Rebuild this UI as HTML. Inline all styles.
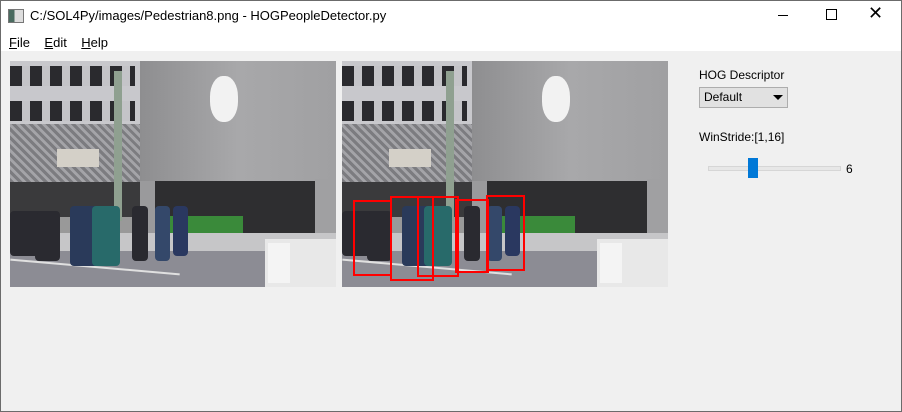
<!DOCTYPE html><html><head><style>
body{margin:0;width:902px;height:412px;background:#f0f0f0;font-family:"Liberation Sans",sans-serif;font-size:12px;position:relative;overflow:hidden}
.a{position:absolute}
.title{left:0;top:0;width:900px;height:31px;background:#fff;border:1px solid #6b6b6b;border-bottom:none}
.menu{left:1px;top:31px;width:900px;height:20px;background:#fff}
.img{width:326px;height:226px;top:61px;overflow:hidden;background:#999}
.img div{position:absolute}
.r{position:absolute;border:2px solid #f00;box-sizing:border-box}
.w{background:repeating-linear-gradient(90deg,#2a2a2e 0 12px,#c4c4c8 12px 20px)}
.p{background:#2a2a30;border-radius:4px}
</style></head><body>
<div class="a" style="left:0;top:0;width:900px;height:410px;border:1px solid #6b6b6b"></div>
<div class="a title"></div>
<div class="a" style="left:8px;top:9px;width:14px;height:12px;border:1px solid #777;background:linear-gradient(90deg,#4a6b60 40%,#ddd 40%)"></div>
<div class="a" style="left:30px;top:8px;font-size:13px;color:#000">C:/SOL4Py/images/Pedestrian8.png - HOGPeopleDetector.py</div>
<div class="a" style="left:778px;top:15px;width:10px;height:1px;background:#000"></div>
<div class="a" style="left:826px;top:9px;width:9px;height:9px;border:1px solid #000"></div>
<div class="a" style="left:868px;top:3px;font-size:18px">✕</div>
<div class="a menu"></div>
<div class="a" style="left:9px;top:35px;font-size:13px"><u>F</u>ile&nbsp;&nbsp;&nbsp;&nbsp;<u>E</u>dit&nbsp;&nbsp;&nbsp;&nbsp;<u>H</u>elp</div>

<div id="ph" class="a img" style="left:10px">
<div style="left:0;top:0;width:130px;height:64px;background:#c8c8cc"></div>
<div class="w" style="left:0;top:5px;width:125px;height:20px"></div>
<div class="w" style="left:0;top:40px;width:125px;height:20px"></div>
<div style="left:0;top:63px;width:130px;height:58px;background:repeating-linear-gradient(45deg,#7c7c80 0 3px,#a4a4a8 3px 6px)"></div>
<div style="left:47px;top:88px;width:42px;height:18px;background:#d4d0c8"></div>
<div style="left:0;top:121px;width:130px;height:35px;background:#3a3a3c"></div>
<div style="left:130px;top:0;width:196px;height:122px;background:linear-gradient(90deg,#8e8e90,#a8a8aa 50%,#a0a0a2)"></div>
<div style="left:200px;top:15px;width:28px;height:46px;background:#f2f2f2;border-radius:45%"></div>
<div style="left:104px;top:10px;width:8px;height:150px;background:#8fa090"></div>
<div style="left:145px;top:120px;width:160px;height:53px;background:#2e2e30"></div>
<div style="left:305px;top:118px;width:21px;height:60px;background:#a0a0a2"></div>
<div style="left:130px;top:120px;width:15px;height:55px;background:#9a9a9c"></div>
<div style="left:160px;top:155px;width:73px;height:28px;background:#3a8a3a"></div>
<div style="left:0;top:172px;width:326px;height:22px;background:#c6c6c8"></div>
<div style="left:0;top:190px;width:326px;height:36px;background:#8c8c94"></div>
<div style="left:0;top:205px;width:170px;height:2px;background:#e0e0e0;transform:rotate(5deg)"></div>
<div class="p" style="left:0;top:150px;width:50px;height:45px"></div>
<div class="p" style="left:25px;top:152px;width:25px;height:48px"></div>
<div class="p" style="left:60px;top:145px;width:30px;height:60px;background:#2a3a5a"></div>
<div class="p" style="left:82px;top:145px;width:28px;height:60px;background:#286a6a"></div>
<div class="p" style="left:122px;top:145px;width:16px;height:55px"></div>
<div class="p" style="left:145px;top:145px;width:15px;height:55px;background:#34486a"></div>
<div class="p" style="left:163px;top:145px;width:15px;height:50px;background:#2a3860"></div>
<div style="left:255px;top:178px;width:71px;height:48px;background:#e8e8e8"></div>
<div style="left:258px;top:182px;width:22px;height:40px;background:#f4f4f4"></div>
</div>
<div id="ph2" class="a img" style="left:342px"></div>
<script>document.getElementById('ph2').innerHTML=document.getElementById('ph').innerHTML;</script>
<div class="r" style="left:353px;top:200px;width:39px;height:76px"></div>
<div class="r" style="left:390px;top:196px;width:44px;height:85px"></div>
<div class="r" style="left:417px;top:196px;width:42px;height:81px"></div>
<div class="r" style="left:455px;top:199px;width:34px;height:74px"></div>
<div class="r" style="left:486px;top:195px;width:39px;height:76px"></div>

<div class="a" style="left:699px;top:68px">HOG Descriptor</div>
<div class="a" style="left:699px;top:87px;width:87px;height:19px;background:#e1e1e1;border:1px solid #adadad"></div>
<div class="a" style="left:704px;top:90px">Default</div>
<div class="a" style="left:773px;top:95px;width:0;height:0;border-left:5px solid transparent;border-right:5px solid transparent;border-top:5px solid #000"></div>
<div class="a" style="left:699px;top:130px">WinStride:[1,16]</div>
<div class="a" style="left:708px;top:166px;width:131px;height:3px;background:#e7e7e7;border:1px solid #d6d6d6"></div>
<div class="a" style="left:748px;top:158px;width:10px;height:20px;background:#0078d7"></div>
<div class="a" style="left:846px;top:162px">6</div>
</body></html>
